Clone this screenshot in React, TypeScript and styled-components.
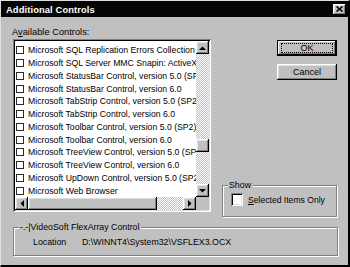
import React from "react";
import styled, { createGlobalStyle } from "styled-components";

const GlobalStyle = createGlobalStyle`
  html, body { margin: 0; padding: 0; background: #c0c0c0; }
  body { font-family: "Liberation Sans", Arial, sans-serif; }
`;

const raised3d = `
  box-shadow: inset -1px -1px #000, inset 1px 1px #fff,
    inset -2px -2px #808080, inset 2px 2px #dfdfdf;
`;

const sunken3d = `
  box-shadow: inset 1px 1px #808080, inset -1px -1px #fff,
    inset 2px 2px #000, inset -2px -2px #dfdfdf;
`;

const stipple = `
  background: repeating-conic-gradient(#c0c0c0 0 25%, #fff 0 50%) 0 0 / 2px 2px;
`;

const Window = styled.div`
  width: 350px;
  height: 267px;
  box-sizing: border-box;
  background: #c0c0c0;
  border-top: 1px solid #dfdfdf;
  border-left: 1px solid #dfdfdf;
  border-right: 2px solid #000;
  border-bottom: 2px solid #000;
  display: flex;
  flex-direction: column;
  font-size: 9px;
  color: #000;
  overflow: hidden;
`;

const TitleBar = styled.div`
  height: 16px;
  background: #050505;
  display: flex;
  align-items: center;
  justify-content: space-between;
  padding: 0 2px 0 5px;
`;

const Title = styled.span`
  color: #fff;
  font-weight: bold;
  font-size: 9.4px;
  letter-spacing: 0.1px;
`;

const CloseButton = styled.div`
  width: 13px;
  height: 11px;
  background: #c0c0c0;
  display: flex;
  align-items: center;
  justify-content: center;
  ${raised3d}
`;

const Body = styled.div`
  flex: 1;
  display: flex;
  flex-direction: column;
  padding: 8px 10px 0 11px;
`;

const TopSection = styled.div`
  display: flex;
  align-items: flex-start;
`;

const LeftColumn = styled.div`
  width: 199px;
  display: flex;
  flex-direction: column;
`;

const Label = styled.div`
  height: 14px;
  line-height: 15px;
  font-size: 9.3px;
  u { text-decoration: underline; }
`;

const ListBox = styled.div`
  margin-left: 1px;
  width: 198px;
  height: 173px;
  box-sizing: border-box;
  padding: 2px;
  background: #fff;
  ${sunken3d}
  display: grid;
  grid-template-columns: 1fr 13px;
  grid-template-rows: 1fr 13px;
`;

const Rows = styled.div`
  overflow: hidden;
  padding-top: 3px;
`;

const Row = styled.div`
  height: 12.75px;
  display: flex;
  align-items: center;
  gap: 4px;
  padding-left: 1px;
  white-space: nowrap;
  font-size: 8.7px;
`;

const SmallBox = styled.span`
  flex: none;
  width: 8px;
  height: 8px;
  box-sizing: border-box;
  border: 1px solid #2a2a2a;
  background: #fff;
`;

const VScroll = styled.div`
  display: flex;
  flex-direction: column;
`;

const HScroll = styled.div`
  display: flex;
`;

const ArrowButton = styled.div`
  flex: none;
  width: 13px;
  height: 13px;
  box-sizing: border-box;
  background: #c0c0c0;
  display: flex;
  align-items: center;
  justify-content: center;
  ${raised3d}
`;

const Track = styled.div<{ $grow: number }>`
  flex: ${(p) => p.$grow} 1 0;
  ${stipple}
`;

const Thumb = styled.div<{ $size: number; $vertical?: boolean }>`
  flex: none;
  ${(p) => (p.$vertical ? `height: ${p.$size}px;` : `width: ${p.$size}px;`)}
  background: #c0c0c0;
  ${raised3d}
`;

const Corner = styled.div`
  background: #c0c0c0;
`;

const RightColumn = styled.div`
  margin-left: 11px;
  width: 115px;
  height: 192px;
  padding-top: 15px;
  box-sizing: border-box;
  display: flex;
  flex-direction: column;
`;

const ButtonStack = styled.div`
  display: flex;
  flex-direction: column;
  align-items: flex-end;
  gap: 8px;
`;

const PushButton = styled.div<{ $default?: boolean }>`
  width: 60px;
  height: 16px;
  box-sizing: border-box;
  background: #c0c0c0;
  display: flex;
  align-items: center;
  justify-content: center;
  font-size: 9px;
  ${(p) =>
    p.$default
      ? `border: 1px solid #000;
         box-shadow: inset -1px -1px #000, inset 1px 1px #fff, inset -2px -2px #808080;`
      : raised3d}
`;

const FocusRing = styled.span`
  width: 50px;
  height: 8px;
  outline: 1px dotted #000;
  display: flex;
  align-items: center;
  justify-content: center;
`;

const GroupBox = styled.fieldset<{ $height: number }>`
  margin: 0;
  min-width: 0;
  height: ${(p) => p.$height}px;
  box-sizing: border-box;
  border: 1px solid #808080;
  box-shadow: inset 1px 1px #fff, 1px 1px #fff;
  padding: 0 6px 0 8px;
`;

const Legend = styled.legend`
  padding: 0 2px 0 1px;
  margin-left: -3px;
  line-height: 10px;
  font-size: 8.8px;
  background: #c0c0c0;
`;

const ShowGroup = styled(GroupBox)`
  margin-top: auto;
  display: flex;
  align-items: center;
`;

const CheckRow = styled.div`
  display: flex;
  align-items: center;
  gap: 5px;
  margin-top: 3px;
  font-size: 8.6px;
  u { text-decoration: underline; }
`;

const BigBox = styled.span`
  width: 12px;
  height: 13px;
  background: #fff;
  ${sunken3d}
`;

const InfoGroup = styled(GroupBox)`
  margin-top: 5px;
  margin-left: 1px;
  width: 325px;
`;

const InfoRow = styled.div`
  display: flex;
  align-items: center;
  height: 20px;
  padding-left: 11px;
  font-size: 8.8px;
`;

const InfoKey = styled.span`
  width: 49px;
`;

const Arrow = ({ dir }: { dir: "up" | "down" | "left" | "right" }) => {
  const pts = {
    up: "0,4 3.5,0.5 7,4",
    down: "0,0 3.5,3.5 7,0",
    left: "4,0 0.5,3.5 4,7",
    right: "0,0 3.5,3.5 0,7",
  }[dir];
  const vertical = dir === "up" || dir === "down";
  return (
    <svg width={vertical ? 7 : 4} height={vertical ? 4 : 7} viewBox={vertical ? "0 0 7 4" : "0 0 4 7"}>
      <polygon points={pts} fill="#000" />
    </svg>
  );
};

const items = [
  "Microsoft SQL Replication Errors Collection",
  "Microsoft SQL Server MMC Snapin: ActiveX Control",
  "Microsoft StatusBar Control, version 5.0 (SP2)",
  "Microsoft StatusBar Control, version 6.0",
  "Microsoft TabStrip Control, version 5.0 (SP2)",
  "Microsoft TabStrip Control, version 6.0",
  "Microsoft Toolbar Control, version 5.0 (SP2)",
  "Microsoft Toolbar Control, version 6.0",
  "Microsoft TreeView Control, version 5.0 (SP2)",
  "Microsoft TreeView Control, version 6.0",
  "Microsoft UpDown Control, version 5.0 (SP2)",
  "Microsoft Web Browser",
];

export default function App() {
  return (
    <>
      <GlobalStyle />
      <Window>
        <TitleBar>
          <Title>Additional Controls</Title>
          <CloseButton>
            <svg width="7" height="6" viewBox="0 0 7 6">
              <path d="M0.5 0.5 L6.5 5.5 M6.5 0.5 L0.5 5.5" stroke="#000" strokeWidth="1.6" />
            </svg>
          </CloseButton>
        </TitleBar>
        <Body>
          <TopSection>
            <LeftColumn>
              <Label>
                A<u>v</u>ailable Controls:
              </Label>
              <ListBox>
                <Rows>
                  {items.map((item) => (
                    <Row key={item}>
                      <SmallBox />
                      {item}
                    </Row>
                  ))}
                </Rows>
                <VScroll>
                  <ArrowButton>
                    <Arrow dir="up" />
                  </ArrowButton>
                  <Track $grow={85} />
                  <Thumb $vertical $size={13} />
                  <Track $grow={32} />
                  <ArrowButton>
                    <Arrow dir="down" />
                  </ArrowButton>
                </VScroll>
                <HScroll>
                  <ArrowButton>
                    <Arrow dir="left" />
                  </ArrowButton>
                  <Thumb $size={129} />
                  <Track $grow={1} />
                  <ArrowButton>
                    <Arrow dir="right" />
                  </ArrowButton>
                </HScroll>
                <Corner />
              </ListBox>
            </LeftColumn>
            <RightColumn>
              <ButtonStack>
                <PushButton $default>
                  <FocusRing>OK</FocusRing>
                </PushButton>
                <PushButton>Cancel</PushButton>
              </ButtonStack>
              <ShowGroup $height={37}>
                <Legend>Show</Legend>
                <CheckRow>
                  <BigBox />
                  <span>
                    <u>S</u>elected Items Only
                  </span>
                </CheckRow>
              </ShowGroup>
            </RightColumn>
          </TopSection>
          <InfoGroup $height={34}>
            <Legend>-.-|VideoSoft FlexArray Control</Legend>
            <InfoRow>
              <InfoKey>Location</InfoKey>
              <span>D:\WINNT4\System32\VSFLEX3.OCX</span>
            </InfoRow>
          </InfoGroup>
        </Body>
      </Window>
    </>
  );
}
